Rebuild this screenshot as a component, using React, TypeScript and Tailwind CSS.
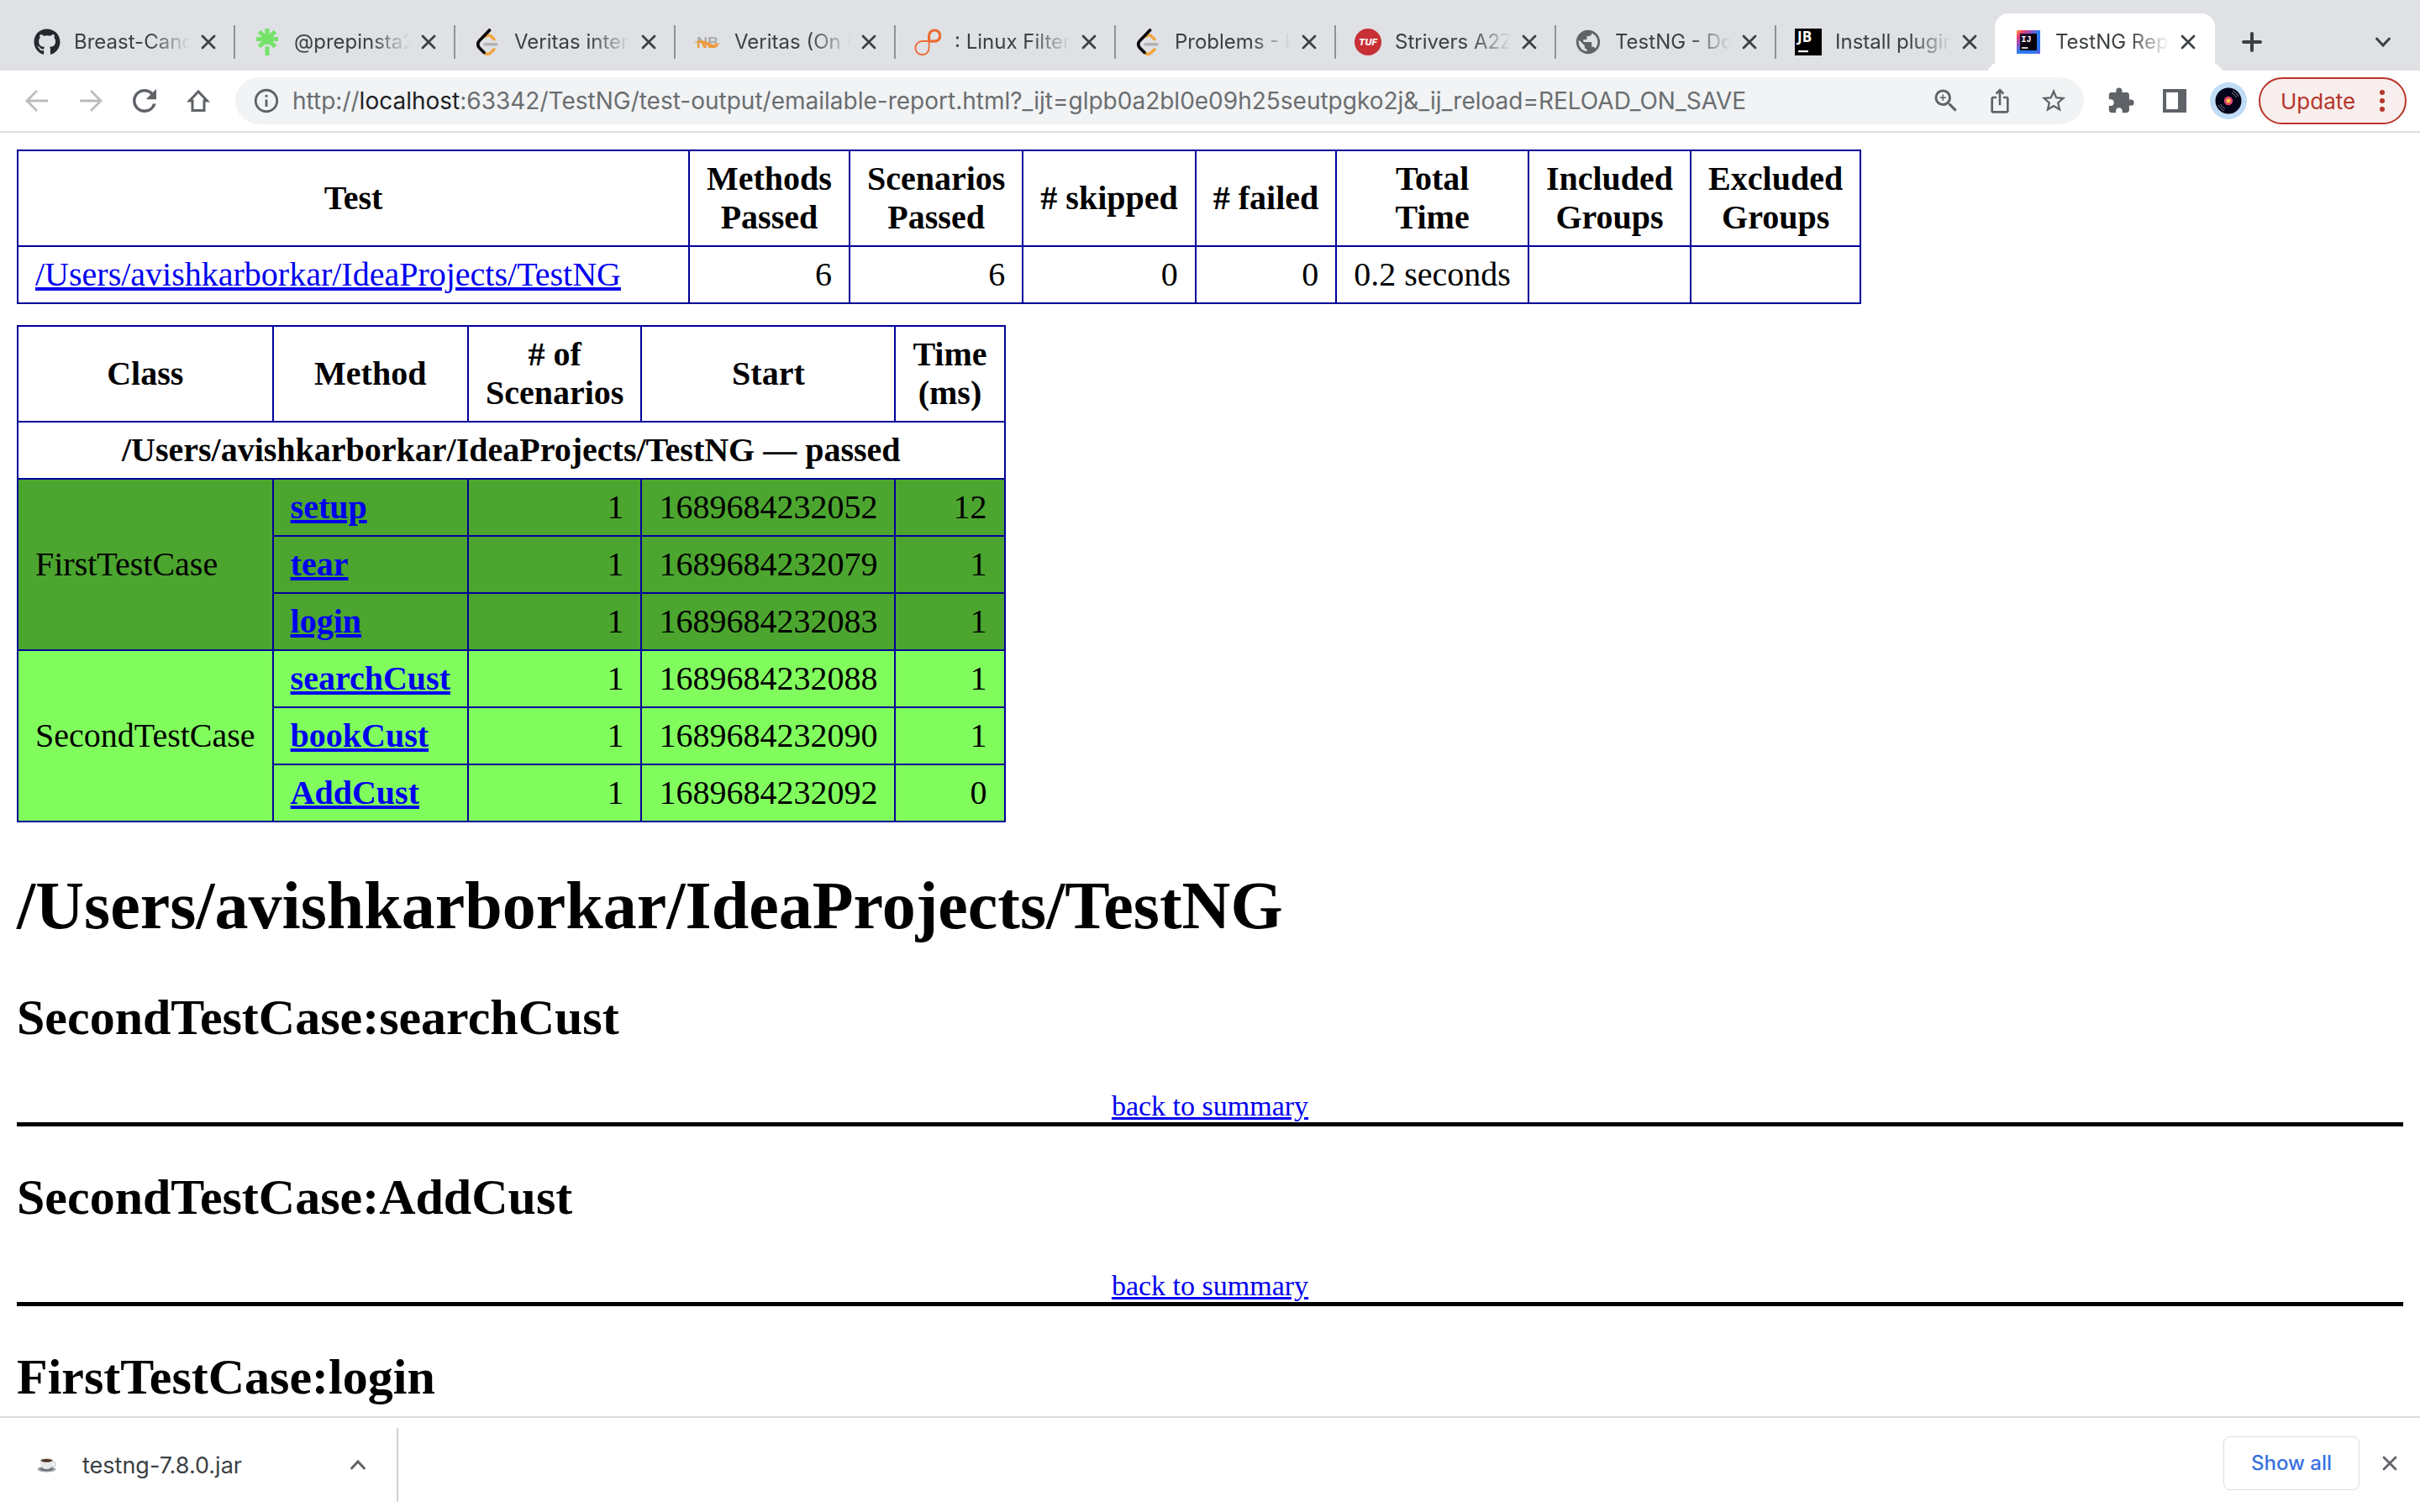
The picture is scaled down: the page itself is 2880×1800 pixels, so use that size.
import type { ReactNode } from "react";
import {
  MdExtension,
  MdIosShare,
  MdOutlineInfo,
  MdPublic,
  MdRefresh,
  MdStarBorder,
  MdZoomIn,
} from "react-icons/md";
import { FaGithub } from "react-icons/fa";

const SUITE = "/Users/avishkarborkar/IdeaProjects/TestNG";

/* ---------- favicons ---------- */

function LinktreeIcon() {
  return (
    <svg viewBox="0 0 32 32" className="size-8">
      <g stroke="#74e368" strokeWidth="5">
        <path d="M16 0v19" />
        <path d="M3 12.5h26" />
        <path d="M6.5 3.5l19 18M25.500 3.500l-19 18" />
        <path d="M16 21.500v10.500" />
      </g>
    </svg>
  );
}

function LeetCodeIcon() {
  return (
    <svg viewBox="0 0 32 32" className="size-8" fill="none" strokeLinecap="round">
      <path d="M14 9.500a4.500 4.500 0 0 1 6-.8l4 4" stroke="#f2a33a" strokeWidth="3.400" />
      <path d="M11 27.500l2.200 1.800a5 5 0 0 0 6.400-.3l4.400-4.200" stroke="#f2a33a" strokeWidth="3.400" />
      <path d="M13 18.800h14" stroke="#b3b3b3" strokeWidth="3.400" />
      <path d="M18.500 2L6.500 14.500a6 6 0 0 0 0 8.500l5.500 5.500" stroke="#0a0a0a" strokeWidth="3.800" />
    </svg>
  );
}

function NbIcon() {
  return (
    <svg viewBox="0 0 32 32" className="size-8">
      <defs>
        <linearGradient id="nb" x1="0" y1="0" x2="0" y2="1">
          <stop offset="0.500" stopColor="#adadae" />
          <stop offset="0.560" stopColor="#eb9c3f" />
        </linearGradient>
      </defs>
      <text x="16" y="22.500" textAnchor="middle" fontFamily="Liberation Sans" fontWeight="700" fontSize="18" fill="url(#nb)">
        NB
      </text>
      <path d="M0 17C6 12 13 14 18 17s9 3 13-1c-3 7-10 7-15 4S6 16 0 17z" fill="#eb9c3f" />
    </svg>
  );
}

function InfinityIcon() {
  return (
    <svg viewBox="0 0 32 32" className="size-8" fill="none" stroke="#ec6b32">
      <path d="M17 15.200h7.200A6.600 6.600 0 1 0 17.600 8.600V15" strokeWidth="3.200" />
      <path d="M17.600 14v9A8.100 8.100 0 1 1 9.500 15H18" strokeWidth="1.800" />
    </svg>
  );
}

function TufIcon() {
  return (
    <svg viewBox="0 0 32 32" className="size-8">
      <circle cx="16" cy="16" r="16" fill="#c73035" />
      <text x="16" y="20" textAnchor="middle" fontFamily="Inter" fontStyle="italic" fontWeight="800" fontSize="11" fill="#fff">
        TUF
      </text>
    </svg>
  );
}

function JetBrainsIcon() {
  return (
    <svg viewBox="0 0 32 32" className="size-8">
      <path d="M0 0h32v32H0z" fill="#000" />
      <text x="3" y="16" fontFamily="Open Sans" fontWeight="700" fontSize="17" fill="#fff">
        JB
      </text>
      <path d="M4 26h12v2.200H4z" fill="#fff" />
    </svg>
  );
}

function IntelliJIcon() {
  return (
    <svg viewBox="0 0 28 28" className="size-7">
      <defs>
        <linearGradient id="ij" x1="0" y1="0" x2="1" y2="1">
          <stop offset="0" stopColor="#fca02f" />
          <stop offset="0.160" stopColor="#ee3f70" />
          <stop offset="0.340" stopColor="#8a4fc4" />
          <stop offset="0.500" stopColor="#2d7ff2" />
          <stop offset="0.850" stopColor="#2b74ee" />
          <stop offset="1" stopColor="#7a55d8" />
        </linearGradient>
        <linearGradient id="ijInner" x1="0" y1="0" x2="1" y2="1">
          <stop offset="0" stopColor="#2a0f33" />
          <stop offset="0.600" stopColor="#050008" />
        </linearGradient>
      </defs>
      <path d="M0 0h28v28H0z" fill="url(#ij)" />
      <path d="M4 4h20v20H4z" fill="url(#ijInner)" />
      <text x="5.500" y="14" fontFamily="Liberation Mono" fontWeight="700" fontSize="10" fill="#fff">
        IJ
      </text>
      <path d="M6 20.200h7.500v1.600H6z" fill="#fff" />
    </svg>
  );
}

/* ---------- browser glyphs ---------- */

function CloseGlyph() {
  return (
    <svg viewBox="0 0 18 18" className="size-[18px]" stroke="currentColor" strokeWidth="2.800" strokeLinecap="round">
      <path d="M2 2l14 14M16 2L2 16" />
    </svg>
  );
}

function ArrowGlyph({ forward = false }: { forward?: boolean }) {
  return (
    <svg viewBox="0 0 28 28" className="size-7" fill="none" stroke="#babcbe" strokeWidth="2.800">
      {forward ? <path d="M1 14h24M14 2l12 12-12 12" /> : <path d="M27 14H3M14 2L2 14l12 12" />}
    </svg>
  );
}

function HomeGlyph() {
  return (
    <svg viewBox="0 0 28 28" className="size-7" fill="none" stroke="#5f6368" strokeWidth="3">
      <path d="M14 3L3.500 14H7v11.500h14V14h3.500z" />
    </svg>
  );
}

function SidePanelGlyph() {
  return (
    <svg viewBox="0 0 28 28" className="size-7">
      <path d="M0 0h28v28H0z" fill="#5f6368" />
      <path d="M4 4h14v20H4z" fill="#fff" />
    </svg>
  );
}

function AvatarGlyph() {
  return (
    <svg viewBox="0 0 44 44" className="size-11">
      <circle cx="22" cy="22" r="22" fill="#c0dcf6" />
      <circle cx="22" cy="22" r="15.500" fill="#05041a" />
      <g fill="none" stroke="#7d7f8c" strokeWidth="1">
        <path d="M27 10a13 13 0 0 1 7 7M26 12.500a10.500 10.500 0 0 1 5.500 5.500" />
        <path d="M17 34a13 13 0 0 1-7-7M18 31.500a10.500 10.500 0 0 1-5.500-5.500" />
      </g>
      <circle cx="22" cy="22" r="5.200" fill="#e2466e" />
      <circle cx="22" cy="22" r="2.500" fill="#f7c83f" />
    </svg>
  );
}

function CoffeeGlyph() {
  return (
    <svg viewBox="0 0 24 18" className="h-[18px] w-6">
      <ellipse cx="11.500" cy="14" rx="11" ry="3.500" fill="#a3a7ad" />
      <ellipse cx="11.500" cy="14" rx="8" ry="2.200" fill="#6f7379" />
      <circle cx="19.500" cy="8" r="2.500" fill="none" stroke="#d3d4d6" strokeWidth="1.500" />
      <path d="M3.500 3c0 7 2.500 11 8 11s8-4 8-11z" fill="#e9e9ea" />
      <ellipse cx="11.500" cy="3.500" rx="8" ry="2.600" fill="#c9c8c7" />
      <ellipse cx="11.500" cy="3.800" rx="6.500" ry="1.800" fill="#4a2f1e" />
    </svg>
  );
}

/* ---------- tab strip ---------- */

type TabInfo = { title: string; icon: ReactNode };

const tabs: TabInfo[] = [
  { title: "Breast-Cancer", icon: <FaGithub className="size-8 text-[#24292f]" /> },
  { title: "@prepinsta2023", icon: <LinktreeIcon /> },
  { title: "Veritas interview", icon: <LeetCodeIcon /> },
  { title: "Veritas (On Campus)", icon: <NbIcon /> },
  { title: ": Linux Filters", icon: <InfinityIcon /> },
  { title: "Problems - LeetCode", icon: <LeetCodeIcon /> },
  { title: "Strivers A2Z DSA", icon: <TufIcon /> },
  { title: "TestNG - Documentation", icon: <MdPublic className="size-[34px] shrink-0 text-[#5f6368]" /> },
  { title: "Install plugins", icon: <JetBrainsIcon /> },
];

function TabBody({ title, icon }: TabInfo) {
  return (
    <>
      <span className="flex size-8 shrink-0 items-center justify-center">{icon}</span>
      <span className="ml-4 min-w-0 flex-1 overflow-hidden whitespace-nowrap text-2xl text-[#3c4043] [mask-image:linear-gradient(to_right,black_calc(100%-48px),transparent)]">
        {title}
      </span>
      <button aria-label={`Close ${title}`} className="ml-1.5 flex size-8 items-center justify-center text-[#3c4043]">
        <CloseGlyph />
      </button>
    </>
  );
}

function TabStrip() {
  return (
    <div className="flex h-[84px] items-end bg-[#dfe1e5] pl-[18px] pr-5">
      {tabs.map((tab, i) => (
        <div key={i} className="flex h-[68px] min-w-0 max-w-[262px] flex-1 items-center">
          <div
            className={
              i === tabs.length - 1
                ? "flex h-10 min-w-0 flex-1 items-center border-r-2 border-transparent pl-[22px] pr-[14px]"
                : "flex h-10 min-w-0 flex-1 items-center border-r-2 border-[#909296] pl-[22px] pr-[14px]"
            }
          >
            <TabBody {...tab} />
          </div>
        </div>
      ))}
      <div className="relative -ml-0.5 flex h-[68px] min-w-0 max-w-[262px] flex-1 items-center rounded-t-2xl bg-white pl-6 pr-4">
        <span className="absolute -left-4 bottom-0 size-4 rounded-br-2xl shadow-[8px_8px_0_0_white] [clip-path:inset(0)]" />
        <TabBody title="TestNG Report" icon={<IntelliJIcon />} />
        <span className="absolute -right-4 bottom-0 size-4 rounded-bl-2xl shadow-[-8px_8px_0_0_white] [clip-path:inset(0)]" />
      </div>
      <button aria-label="New tab" className="ml-5 flex h-[68px] w-12 items-center justify-center text-[#3c4043]">
        <svg viewBox="0 0 24 24" className="size-6" stroke="currentColor" strokeWidth="4" strokeLinecap="round">
          <path d="M12 2v20M2 12h20" />
        </svg>
      </button>
      <button aria-label="Search tabs" className="ml-auto flex h-[68px] w-12 items-center justify-center text-[#3c4043]">
        <svg viewBox="0 0 20 14" className="h-[14px] w-5" fill="none" stroke="currentColor" strokeWidth="3" strokeLinecap="round">
          <path d="M2.500 3l7.500 8 7.500-8" />
        </svg>
      </button>
    </div>
  );
}

/* ---------- toolbar ---------- */

function ToolButton({ label, children }: { label: string; children: ReactNode }) {
  return (
    <button aria-label={label} className="flex h-14 w-16 shrink-0 items-center justify-center text-[#5f6368]">
      {children}
    </button>
  );
}

const URL_HOST = "localhost";
const URL_REST =
  ":63342/TestNG/test-output/emailable-report.html?_ijt=glpb0a2bl0e09h25seutpgko2j&_ij_reload=RELOAD_ON_SAVE";

function Toolbar() {
  return (
    <div className="flex h-[74px] items-center border-b-2 border-[#dcdddf] bg-white pl-3 pr-4">
      <ToolButton label="Back"><ArrowGlyph /></ToolButton>
      <ToolButton label="Forward"><ArrowGlyph forward /></ToolButton>
      <ToolButton label="Reload"><MdRefresh className="size-[42px]" /></ToolButton>
      <ToolButton label="Home"><HomeGlyph /></ToolButton>
      <div className="ml-3 flex h-14 min-w-0 flex-1 items-center rounded-full bg-[#f1f3f4] pl-5 pr-1">
        <button aria-label="View site information" className="shrink-0 text-[#5f6368]">
          <MdOutlineInfo className="size-[34px]" />
        </button>
        <div className="relative ml-[14px] h-14 min-w-0 flex-1 text-[28px] leading-[56px]">
          <input
            aria-label="Address"
            defaultValue={"http://" + URL_HOST + URL_REST}
            className="h-14 w-full bg-transparent text-transparent caret-black outline-none"
          />
          <div aria-hidden="true" className="pointer-events-none absolute inset-0 overflow-hidden whitespace-nowrap text-[#6a6d70]">
            http://<span className="text-[#202124]">{URL_HOST}</span>{URL_REST}
          </div>
        </div>
        <ToolButton label="Zoom"><MdZoomIn className="size-9" /></ToolButton>
        <ToolButton label="Share"><MdIosShare className="size-8" /></ToolButton>
        <ToolButton label="Bookmark"><MdStarBorder className="size-[34px]" /></ToolButton>
      </div>
      <div className="ml-3 flex">
        <ToolButton label="Extensions"><MdExtension className="size-[34px]" /></ToolButton>
        <ToolButton label="Side panel"><SidePanelGlyph /></ToolButton>
        <ToolButton label="Profile"><AvatarGlyph /></ToolButton>
      </div>
      <button className="ml-1 flex h-14 w-44 shrink-0 items-center justify-between rounded-full border-2 border-[#b93428] bg-[#f8eeed] px-6 text-[26px] text-[#b5352a]">
        Update
        <svg viewBox="0 0 6 26" className="h-[26px] w-1.5" fill="currentColor">
          <circle cx="3" cy="3" r="3" />
          <circle cx="3" cy="13" r="3" />
          <circle cx="3" cy="23" r="3" />
        </svg>
      </button>
    </div>
  );
}

/* ---------- report ---------- */

const cell = "border-2 border-[#000099] px-5 py-2.5";
const numCell = "border-2 border-[#000099] px-5 py-2.5 text-right";

const groups = [
  {
    name: "FirstTestCase",
    color: "bg-[#4ca52f]",
    rows: [
      ["setup", "1", "1689684232052", "12"],
      ["tear", "1", "1689684232079", "1"],
      ["login", "1", "1689684232083", "1"],
    ],
  },
  {
    name: "SecondTestCase",
    color: "bg-[#80fc5d]",
    rows: [
      ["searchCust", "1", "1689684232088", "1"],
      ["bookCust", "1", "1689684232090", "1"],
      ["AddCust", "1", "1689684232092", "0"],
    ],
  },
];

function SuiteTable() {
  return (
    <table id="summary" className="border-collapse">
      <thead>
        <tr>
          <th className={`${cell} w-[799px]`}>Test</th>
          <th className={cell}>Methods<br />Passed</th>
          <th className={cell}>Scenarios<br />Passed</th>
          <th className={cell}># skipped</th>
          <th className={cell}># failed</th>
          <th className={cell}>Total<br />Time</th>
          <th className={cell}>Included<br />Groups</th>
          <th className={cell}>Excluded<br />Groups</th>
        </tr>
      </thead>
      <tbody>
        <tr>
          <td className={cell}><a href="#t0" className="text-[#0000ee] underline">{SUITE}</a></td>
          <td className={numCell}>6</td>
          <td className={numCell}>6</td>
          <td className={numCell}>0</td>
          <td className={numCell}>0</td>
          <td className={numCell}>0.2 seconds</td>
          <td className={cell} />
          <td className={cell} />
        </tr>
      </tbody>
    </table>
  );
}

function ScenarioTable() {
  return (
    <table className="mt-[25px] border-collapse">
      <thead>
        <tr>
          <th className={cell}>Class</th>
          <th className={cell}>Method</th>
          <th className={cell}># of<br />Scenarios</th>
          <th className={cell}>Start</th>
          <th className={cell}>Time<br />(ms)</th>
        </tr>
      </thead>
      <tbody id="t0">
        <tr>
          <th colSpan={5} className={cell}>{SUITE} — passed</th>
        </tr>
      </tbody>
      {groups.map((g) => (
        <tbody key={g.name} className={g.color}>
          {g.rows.map(([method, count, start, time], i) => (
            <tr key={method}>
              {i === 0 && <td rowSpan={g.rows.length} className={cell}>{g.name}</td>}
              <td className={cell}>
                <a href={`#${method}`} className="font-bold text-[#0000ee] underline">{method}</a>
              </td>
              <td className={numCell}>{count}</td>
              <td className={numCell}>{start}</td>
              <td className={numCell}>{time}</td>
            </tr>
          ))}
        </tbody>
      ))}
    </table>
  );
}

function MethodSection({ cls, method }: { cls: string; method: string }) {
  return (
    <section id={method}>
      <h2 className="mt-[50px] text-[60px] font-bold leading-[69px]">{cls}:{method}</h2>
      <p className="mt-[51px] border-b-[5px] border-black text-center text-[34px] leading-[39px]">
        <a href="#summary" className="text-[#0000ee] underline">back to summary</a>
      </p>
    </section>
  );
}

function Report() {
  return (
    <main className="min-h-0 flex-1 overflow-hidden bg-white p-5 font-['Liberation_Serif',serif] text-[40px] leading-[46px] text-black">
      <SuiteTable />
      <ScenarioTable />
      <h1 className="mb-[53px] mt-[53px] text-[80px] font-bold leading-[92px]">{SUITE}</h1>
      <MethodSection cls="SecondTestCase" method="searchCust" />
      <MethodSection cls="SecondTestCase" method="AddCust" />
      <MethodSection cls="FirstTestCase" method="login" />
    </main>
  );
}

/* ---------- download shelf ---------- */

function DownloadShelf() {
  return (
    <footer className="flex h-[114px] shrink-0 items-center border-t-2 border-[#dadbdd] bg-white pr-5">
      <div className="flex h-[88px] w-[474px] items-center border-r-2 border-[#cfd0d2] pl-11 pr-[34px]">
        <CoffeeGlyph />
        <a href="#download" className="ml-[30px] flex-1 pt-0.5 text-[27px] text-[#3c4043]">testng-7.8.0.jar</a>
        <button aria-label="Download options" className="flex h-8 w-6 items-center justify-center text-[#5f6368]">
          <svg viewBox="0 0 20 14" className="h-[14px] w-5" fill="none" stroke="currentColor" strokeWidth="3" strokeLinecap="round">
            <path d="M2.500 11L10 3l7.500 8" />
          </svg>
        </button>
      </div>
      <div className="ml-auto flex items-center gap-5 pb-1">
        <button className="h-16 w-[162px] rounded-lg border border-[#dadce0] text-2xl font-medium text-[#3871e0]">
          Show all
        </button>
        <button aria-label="Close downloads" className="flex size-8 items-center justify-center text-[#5f6368]">
          <CloseGlyph />
        </button>
      </div>
    </footer>
  );
}

export default function App() {
  return (
    <div className="flex h-screen flex-col overflow-hidden bg-white font-['Inter',sans-serif]">
      <header className="shrink-0">
        <TabStrip />
        <Toolbar />
      </header>
      <Report />
      <DownloadShelf />
    </div>
  );
}
